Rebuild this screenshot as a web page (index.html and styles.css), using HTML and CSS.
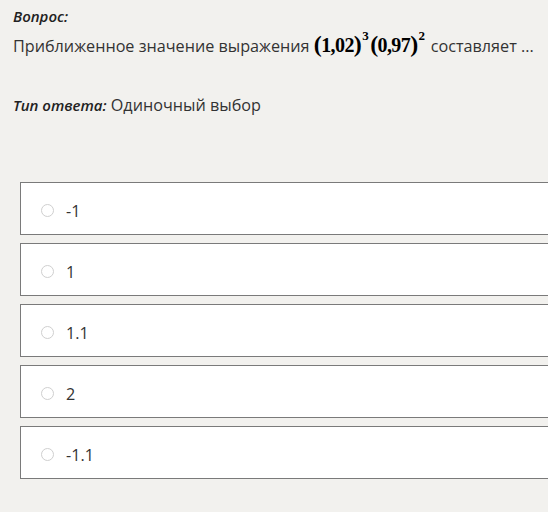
FILE: index.html
```html
<!DOCTYPE html>
<html lang="ru">
<head>
<meta charset="utf-8">
<link rel="stylesheet" href="styles.css">
</head>
<body>
<div class="page">
  <div class="q-label">Вопрос:</div>
  <div class="q-text">Приближенное значение выражения <span class="formula"><span class="par">(</span>1,02<span class="par">)</span><sup>3</sup><span class="par">(</span>0,97<span class="par">)</span><sup>2</sup></span> составляет ...</div>
  <div class="answer-type"><span class="at-label">Тип ответа:</span> Одиночный выбор</div>
  <div class="options">
    <label class="option"><span class="radio"></span><span class="opt-text">-1</span></label>
    <label class="option"><span class="radio"></span><span class="opt-text">1</span></label>
    <label class="option"><span class="radio"></span><span class="opt-text">1.1</span></label>
    <label class="option"><span class="radio"></span><span class="opt-text">2</span></label>
    <label class="option"><span class="radio"></span><span class="opt-text">-1.1</span></label>
  </div>
</div>
</body>
</html>
```
FILE: styles.css
```css
html, body {
  margin: 0;
  padding: 0;
  background: #f2f1ee;
}
body {
  font-family: "Open Sans", "Noto Sans", sans-serif;
  color: #333;
  font-size: 16.2px;
  overflow: hidden;
}
.page {
  padding: 6px 0 0 13px;
}
.q-label {
  font-weight: 600;
  font-style: italic;
  font-size: 15px;
  color: #222;
  line-height: 20px;
}
.q-text {
  margin-top: 0;
  height: 36px;
  line-height: 36px;
  white-space: nowrap;
}
.formula {
  font-family: "Liberation Serif", serif;
  font-weight: bold;
  font-size: 20px;
  color: #000;
  letter-spacing: -0.6px;
  margin-left: 0;
}
.formula .par {
  font-size: 24px;
}
.formula sup {
  font-size: 13px;
  vertical-align: 12px;
  line-height: 0;
  margin: 0 2px 0 1px;
}
.answer-type {
  margin-top: 33px;
  line-height: 20px;
}
.at-label {
  font-weight: 600;
  font-style: italic;
  font-size: 15px;
  color: #222;
}
.options {
  margin-top: 67px;
  margin-left: 7px;
  display: flex;
  flex-direction: column;
  gap: 8px;
  margin-right: -20px;
}
.option {
  display: flex;
  align-items: center;
  height: 51px;
  background: #fff;
  border: 1px solid #7a7a7a;
  padding-left: 20px;
}
.radio {
  width: 11px;
  height: 11px;
  border: 1px solid #cfcfcf;
  border-radius: 50%;
  background: #fff;
  margin-right: 12px;
  margin-top: 3px;
}
.opt-text {
  color: #333;
  font-size: 16.2px;
  line-height: 20px;
  padding-top: 5px;
}
```
